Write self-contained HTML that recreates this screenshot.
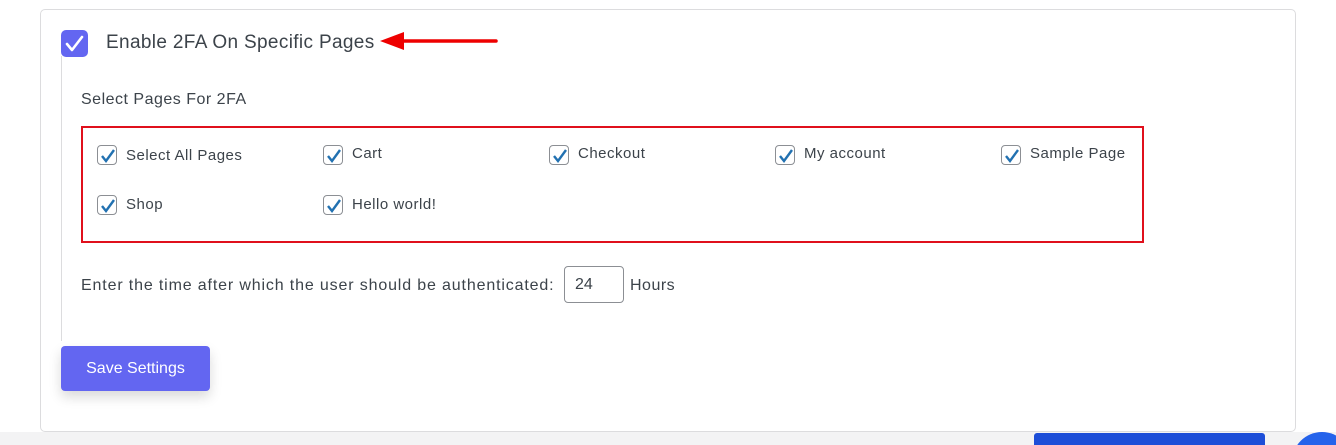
<!DOCTYPE html>
<html><head><style>
*{margin:0;padding:0;box-sizing:border-box}
html,body{width:1336px;height:445px;overflow:hidden}
body{background:#fff;position:relative;font-family:"Liberation Sans",sans-serif;color:#3c434a}
.a{position:absolute;white-space:nowrap}
.card{left:40px;top:9px;width:1256px;height:423px;border:1px solid #dcdcde;border-radius:5px;background:#fff}
.cb{width:20px;height:20px;border:1px solid #8c8f94;border-radius:4px;background:#fff}
.cb svg{position:absolute;left:1px;top:1px}
.lbl{font-size:15px;color:#3c434a;letter-spacing:0.5px}
</style></head><body>
<div class="a" style="left:0;top:432px;width:1336px;height:13px;background:#f3f3f4;overflow:hidden">
<div class="a" style="left:1034px;top:1px;width:231px;height:12px;background:#1d4ed8;border-radius:3px 3px 0 0"></div>
<div class="a" style="left:1292px;top:0;width:60px;height:60px;border-radius:50%;background:#2563eb"></div>
</div>
<div class="a card"></div>
<div class="a" style="left:61px;top:56px;width:1px;height:285px;background:#dcdcde"></div>
<div class="a" style="left:61px;top:30px;width:27px;height:27px;border-radius:5px;background:#6366f1">
<svg width="27" height="27" viewBox="0 0 27 27"><path d="M6 14l5 6 10-13" stroke="#fff" stroke-width="2.6" fill="none" stroke-linecap="round" stroke-linejoin="round"/></svg></div>
<div class="a" style="left:106px;top:32px;font-size:19px;color:#3c434a;letter-spacing:0.35px">Enable 2FA On Specific Pages</div>
<svg class="a" style="left:378px;top:30px" width="124" height="24"><path d="M118 11H20" stroke="#e00" stroke-width="3.5" stroke-linecap="round"/><path d="M2 11L26 2V20Z" fill="#e00"/></svg>
<div class="a" style="left:81px;top:91px;font-size:16px;color:#3c434a;letter-spacing:0.5px">Select Pages For 2FA</div>
<div class="a" style="left:81px;top:126px;width:1063px;height:117px;border:2px solid #e0101c"></div>
<div class="a cb" style="left:97px;top:145px"><svg width="18" height="18"><path d="M3 9l4 5 8-11" stroke="#2271b1" stroke-width="2.4" fill="none"/></svg></div>
<div class="a lbl" style="left:126px;top:147px">Select All Pages</div>
<div class="a cb" style="left:323px;top:145px"><svg width="18" height="18"><path d="M3 9l4 5 8-11" stroke="#2271b1" stroke-width="2.4" fill="none"/></svg></div>
<div class="a lbl" style="left:352px;top:145px">Cart</div>
<div class="a cb" style="left:549px;top:145px"><svg width="18" height="18"><path d="M3 9l4 5 8-11" stroke="#2271b1" stroke-width="2.4" fill="none"/></svg></div>
<div class="a lbl" style="left:578px;top:145px">Checkout</div>
<div class="a cb" style="left:775px;top:145px"><svg width="18" height="18"><path d="M3 9l4 5 8-11" stroke="#2271b1" stroke-width="2.4" fill="none"/></svg></div>
<div class="a lbl" style="left:804px;top:145px">My account</div>
<div class="a cb" style="left:1001px;top:145px"><svg width="18" height="18"><path d="M3 9l4 5 8-11" stroke="#2271b1" stroke-width="2.4" fill="none"/></svg></div>
<div class="a lbl" style="left:1030px;top:145px">Sample Page</div>
<div class="a cb" style="left:97px;top:195px"><svg width="18" height="18"><path d="M3 9l4 5 8-11" stroke="#2271b1" stroke-width="2.4" fill="none"/></svg></div>
<div class="a lbl" style="left:126px;top:196px">Shop</div>
<div class="a cb" style="left:323px;top:195px"><svg width="18" height="18"><path d="M3 9l4 5 8-11" stroke="#2271b1" stroke-width="2.4" fill="none"/></svg></div>
<div class="a lbl" style="left:352px;top:196px">Hello world!</div>
<div class="a" style="left:81px;top:277px;font-size:16px;color:#3c434a;letter-spacing:0.85px">Enter the time after which the user should be authenticated:</div>
<div class="a" style="left:564px;top:266px;width:60px;height:37px;border:1px solid #8c8f94;border-radius:4px;font-size:16px;padding:9px 0 0 10px">24</div>
<div class="a" style="left:630px;top:277px;font-size:16px;letter-spacing:0.5px">Hours</div>
<div class="a" style="left:61px;top:346px;width:149px;height:45px;background:#6366f1;border-radius:4px;color:#fff;font-size:16px;line-height:45px;text-align:center;box-shadow:0 6px 12px rgba(0,0,0,.15)">Save Settings</div>
</body></html>
